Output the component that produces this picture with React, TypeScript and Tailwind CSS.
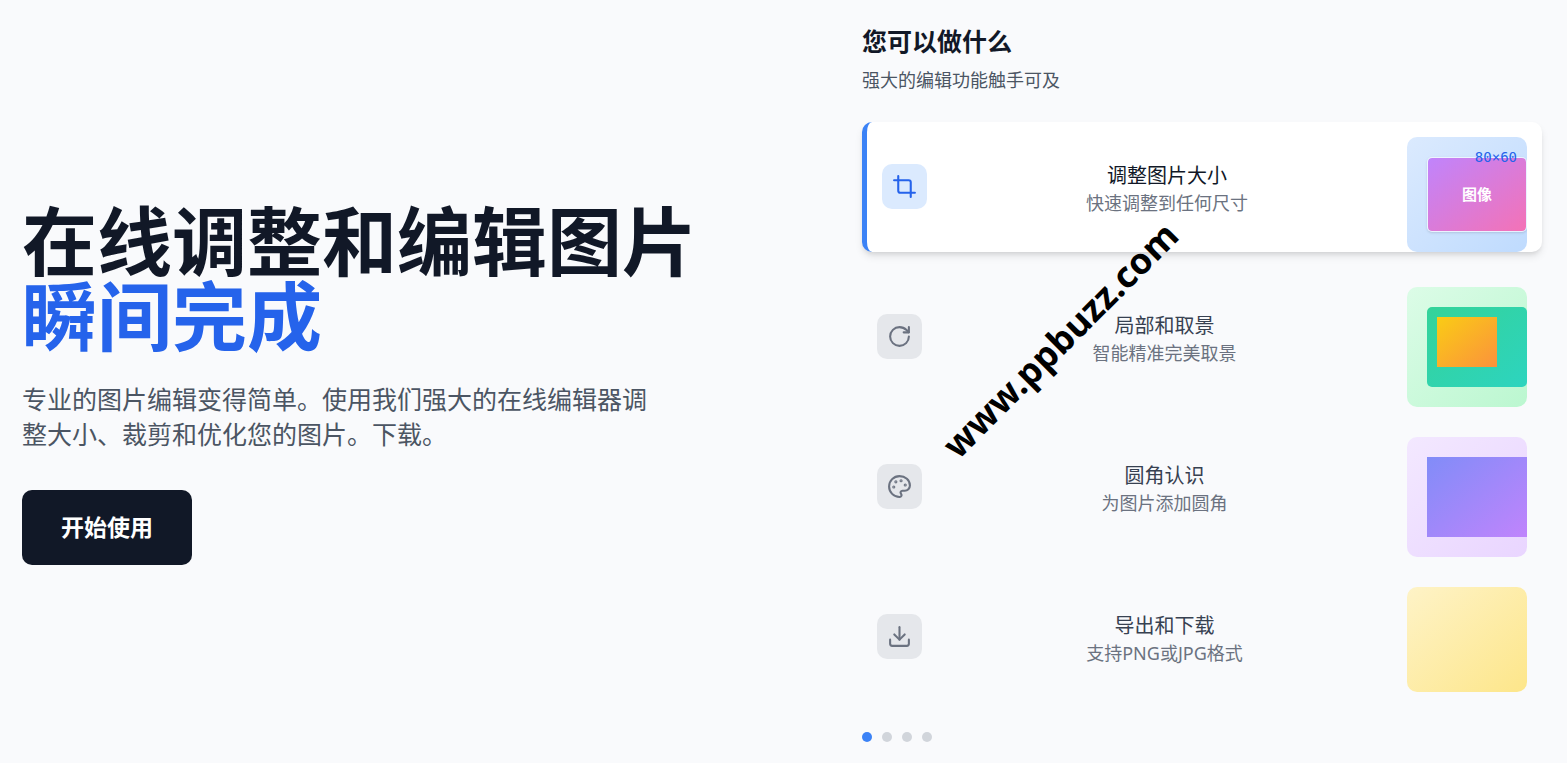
import { clsx } from 'clsx';
import { Crop, Download, Palette, RotateCw } from 'lucide-react';
import type { LucideIcon } from 'lucide-react';
import { useState } from 'react';
import type { ReactNode } from 'react';

interface Feature {
  id: string;
  title: string;
  description: string;
  icon: LucideIcon;
  preview: ReactNode;
}

const features: Feature[] = [
  {
    id: 'resize',
    title: '调整图片大小',
    description: '快速调整到任何尺寸',
    icon: Crop,
    preview: (
      <div className="relative h-[115px] overflow-hidden rounded-[10px] bg-linear-to-br/srgb from-[#dbeafe] to-[#bfdbfe] pt-5 pl-5">
        <div className="flex h-[75px] items-center justify-center rounded-[5px] border border-white/60 bg-linear-to-br/srgb from-[#c084fc] to-[#f472b6] bg-clip-padding text-[15px] font-bold text-white shadow-sm">
          图像
        </div>
        <span className="absolute top-2.5 right-2.5 font-['DejaVu_Sans_Mono',monospace] text-sm leading-5 text-[#2563eb]">
          80×60
        </span>
      </div>
    ),
  },
  {
    id: 'crop',
    title: '局部和取景',
    description: '智能精准完美取景',
    icon: RotateCw,
    preview: (
      <div className="h-[120px] overflow-hidden rounded-[10px] bg-linear-to-br/srgb from-[#dcfce7] to-[#bbf7d0] pt-5 pl-5">
        <div className="h-20 rounded-[5px] bg-linear-to-br/srgb from-[#34d399] to-[#2dd4bf] p-2.5">
          <div className="h-[50px] w-[60px] bg-linear-to-br/srgb from-[#facc15] to-[#fb923c]" />
        </div>
      </div>
    ),
  },
  {
    id: 'corners',
    title: '圆角认识',
    description: '为图片添加圆角',
    icon: Palette,
    preview: (
      <div className="h-[120px] overflow-hidden rounded-[10px] bg-linear-to-br/srgb from-[#f3e8ff] to-[#e9d5ff] pt-5 pl-5">
        <div className="h-20 bg-linear-to-br/srgb from-[#818cf8] to-[#c084fc]" />
      </div>
    ),
  },
  {
    id: 'export',
    title: '导出和下载',
    description: '支持PNG或JPG格式',
    icon: Download,
    preview: (
      <div className="h-[105px] rounded-[10px] bg-linear-to-br/srgb from-[#fef3c7] to-[#fde68a]" />
    ),
  },
];

interface FeatureCardProps {
  feature: Feature;
  active: boolean;
  onSelect: () => void;
}

const FeatureCard = ({ feature, active, onSelect }: FeatureCardProps) => {
  const Icon = feature.icon;

  return (
    <button
      type="button"
      onClick={onSelect}
      className={clsx(
        'flex w-full cursor-pointer items-center rounded-[10px] p-[15px]',
        active &&
          'border-l-5 border-[#3b82f6] bg-white shadow-[0_5px_8px_-1px_rgba(0,0,0,0.1),0_3px_5px_-2px_rgba(0,0,0,0.1)]'
      )}
    >
      <span
        className={clsx(
          'flex size-[45px] shrink-0 items-center justify-center rounded-[10px]',
          active ? 'bg-[#dbeafe] text-[#2563eb]' : 'bg-[#e5e7eb] text-[#6b7280]'
        )}
      >
        <Icon size={25} />
      </span>
      <span className="flex flex-1 flex-col pt-1 text-center">
        <span
          className={clsx(
            'text-xl leading-7',
            active ? 'text-[#111827]' : 'text-[#374151]'
          )}
        >
          {feature.title}
        </span>
        <span className="text-lg leading-[26px] text-[#6b7280]">
          {feature.description}
        </span>
      </span>
      <div className="h-[100px] w-[120px] shrink-0">{feature.preview}</div>
    </button>
  );
};

const Hero = () => (
  <section className="flex flex-col items-start pt-1.5">
    <h1 className="text-[75px] leading-none font-bold text-[#111827]">
      在线调整和编辑图片
      <span className="block text-[#2563eb]">瞬间完成</span>
    </h1>
    <p className="mt-7 max-w-[640px] text-[25px] leading-[35px] text-[#4b5563]">
      专业的图片编辑变得简单。使用我们强大的在线编辑器调整大小、裁剪和优化您的图片。下载。
    </p>
    <button
      type="button"
      className="mt-[38px] h-[75px] w-[170px] cursor-pointer rounded-[10px] bg-[#111827] text-[23px] font-bold text-white"
    >
      开始使用
    </button>
  </section>
);

const App = () => {
  const [activeIndex, setActiveIndex] = useState(0);

  return (
    <main className="relative grid min-h-screen grid-cols-2 items-center gap-40 overflow-hidden bg-[#f9fafc] pr-[25px] pl-[22px] font-['Noto_Sans','Noto_Sans_CJK_SC',sans-serif]">
      <Hero />

      <section>
        <h2 className="text-[25px] leading-[38px] font-bold text-[#111827]">
          您可以做什么
        </h2>
        <p className="mt-1.5 text-lg leading-7 text-[#4b5563]">
          强大的编辑功能触手可及
        </p>

        <div className="mt-7 flex flex-col gap-5">
          {features.map((feature, index) => (
            <FeatureCard
              key={feature.id}
              feature={feature}
              active={index === activeIndex}
              onSelect={() => setActiveIndex(index)}
            />
          ))}
        </div>

        <div className="mt-[30px] flex gap-2.5">
          {features.map((feature, index) => (
            <button
              key={feature.id}
              type="button"
              aria-label={feature.title}
              onClick={() => setActiveIndex(index)}
              className={clsx(
                'size-2.5 cursor-pointer rounded-full',
                index === activeIndex ? 'bg-[#3b82f6]' : 'bg-[#d1d5db]'
              )}
            />
          ))}
        </div>
      </section>

      <span className="pointer-events-none absolute top-[315px] left-[903px] -rotate-45 text-4xl leading-[50px] font-bold whitespace-nowrap text-black">
        www.ppbuzz.com
      </span>
    </main>
  );
};

export default App;
